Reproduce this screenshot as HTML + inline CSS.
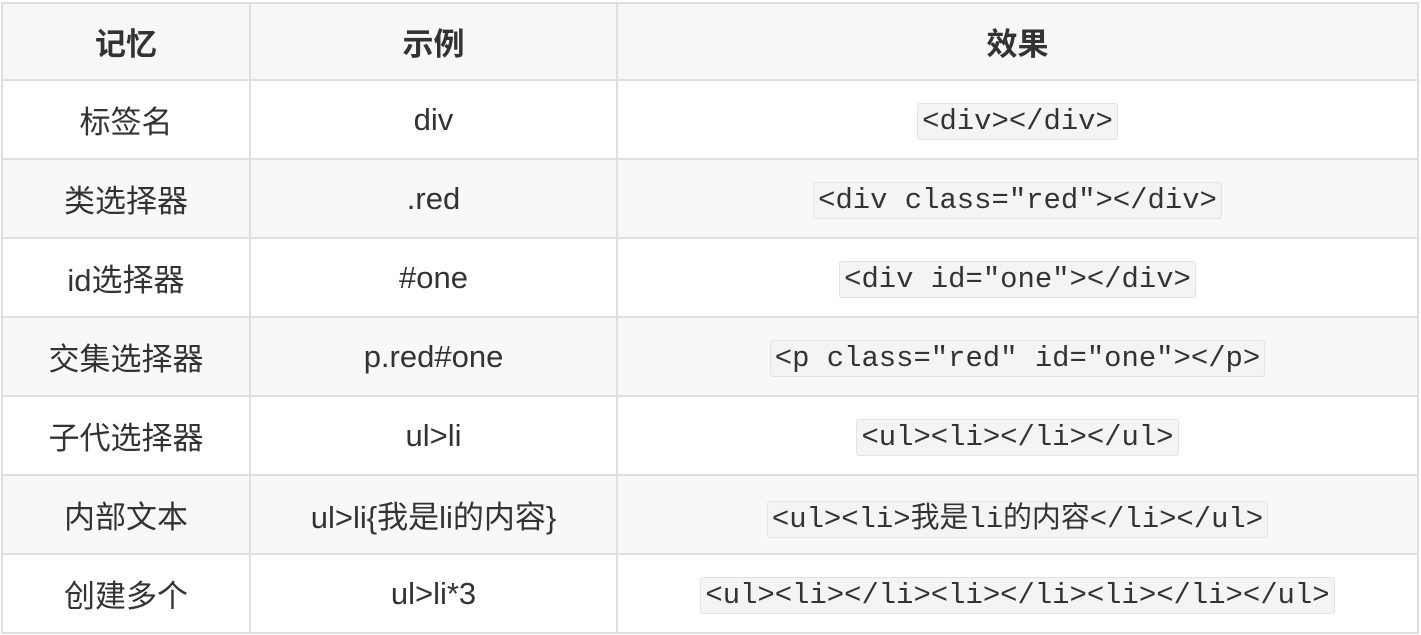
<!DOCTYPE html>
<html><head><meta charset="utf-8"><style>
html,body{margin:0;padding:0;background:#fff;}
table{position:absolute;left:1px;top:2px;border-collapse:collapse;font-family:"Liberation Sans","Noto Sans CJK SC",sans-serif;font-size:31px;color:#333;}
td,th{border:2px solid #dfdfdf;text-align:center;padding:0;height:77px;}
th{font-weight:bold;background:#f7f7f7;height:75px;}
tr:nth-child(odd) td{background:#f8f8f8;}
code{font-family:"Liberation Mono","Noto Sans CJK SC",monospace;font-size:28.9px;background:#f3f4f4;border:1px solid #e3e3e3;border-radius:3px;padding:1px 4px;}
</style></head><body>
<table>
<tr><th style="width:246px">记忆</th><th style="width:365px">示例</th><th style="width:799px">效果</th></tr>
<tr><td>标签名</td><td>div</td><td><code>&lt;div&gt;&lt;/div&gt;</code></td></tr>
<tr><td>类选择器</td><td>.red</td><td><code>&lt;div class="red"&gt;&lt;/div&gt;</code></td></tr>
<tr><td>id选择器</td><td>#one</td><td><code>&lt;div id="one"&gt;&lt;/div&gt;</code></td></tr>
<tr><td>交集选择器</td><td>p.red#one</td><td><code>&lt;p class="red" id="one"&gt;&lt;/p&gt;</code></td></tr>
<tr><td>子代选择器</td><td>ul&gt;li</td><td><code>&lt;ul&gt;&lt;li&gt;&lt;/li&gt;&lt;/ul&gt;</code></td></tr>
<tr><td>内部文本</td><td>ul&gt;li{我是li的内容}</td><td><code>&lt;ul&gt;&lt;li&gt;我是li的内容&lt;/li&gt;&lt;/ul&gt;</code></td></tr>
<tr><td>创建多个</td><td>ul&gt;li*3</td><td><code>&lt;ul&gt;&lt;li&gt;&lt;/li&gt;&lt;li&gt;&lt;/li&gt;&lt;li&gt;&lt;/li&gt;&lt;/ul&gt;</code></td></tr>
</table>
</body></html>
